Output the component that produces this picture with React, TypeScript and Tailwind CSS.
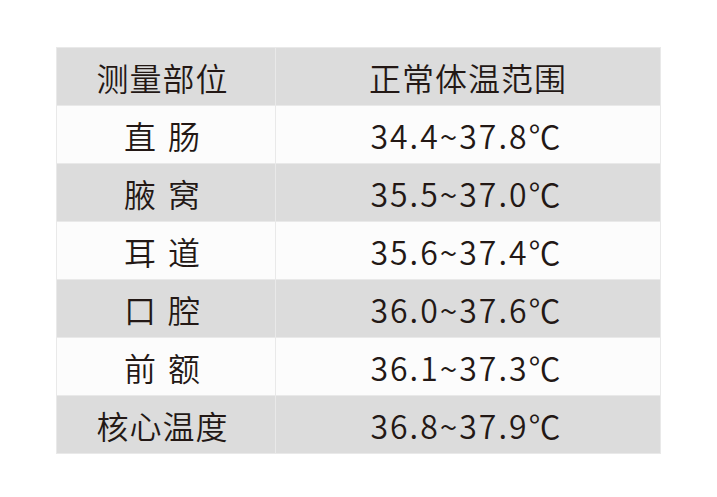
const rows = [
  { part: ["直", "肠"], range: "34.4~37.8℃" },
  { part: ["腋", "窝"], range: "35.5~37.0℃" },
  { part: ["耳", "道"], range: "35.6~37.4℃" },
  { part: ["口", "腔"], range: "36.0~37.6℃" },
  { part: ["前", "额"], range: "36.1~37.3℃" },
  { part: ["核心温度"], range: "36.8~37.9℃" },
];

export default function App() {
  return (
    <div
      className="w-[717px] h-[497px] bg-white pt-[47px] pl-[56px] text-[#231815]"
      style={{ fontFamily: '"Noto Sans CJK SC", "Noto Sans", sans-serif' }}
    >
      <table className="w-[605px] border-collapse text-[32px] leading-none font-[350]">
        <thead>
          <tr className="h-[58px] bg-[#dcdcdc]">
            <th className="w-[219px] border border-[#e9e9e9] font-[350] text-center pr-[7px] tracking-[1px]">测量部位</th>
            <th className="border border-[#e9e9e9] font-[350] text-center tracking-[1px]">正常体温范围</th>
          </tr>
        </thead>
        <tbody>
          {rows.map((r, i) => (
            <tr key={r.range} className={i % 2 === 0 ? "h-[58px] bg-[#fcfcfc]" : "h-[58px] bg-[#dcdcdc]"}>
              <td className="border border-[#e9e9e9] pr-[7px]">
                <div className="flex justify-center gap-[11px] tracking-[1px]">
                  {r.part.map((p) => (
                    <span key={p}>{p}</span>
                  ))}
                </div>
              </td>
              <td className="border border-[#e9e9e9] text-center pr-[3px] tracking-[2px]">{r.range}</td>
            </tr>
          ))}
        </tbody>
      </table>
    </div>
  );
}
